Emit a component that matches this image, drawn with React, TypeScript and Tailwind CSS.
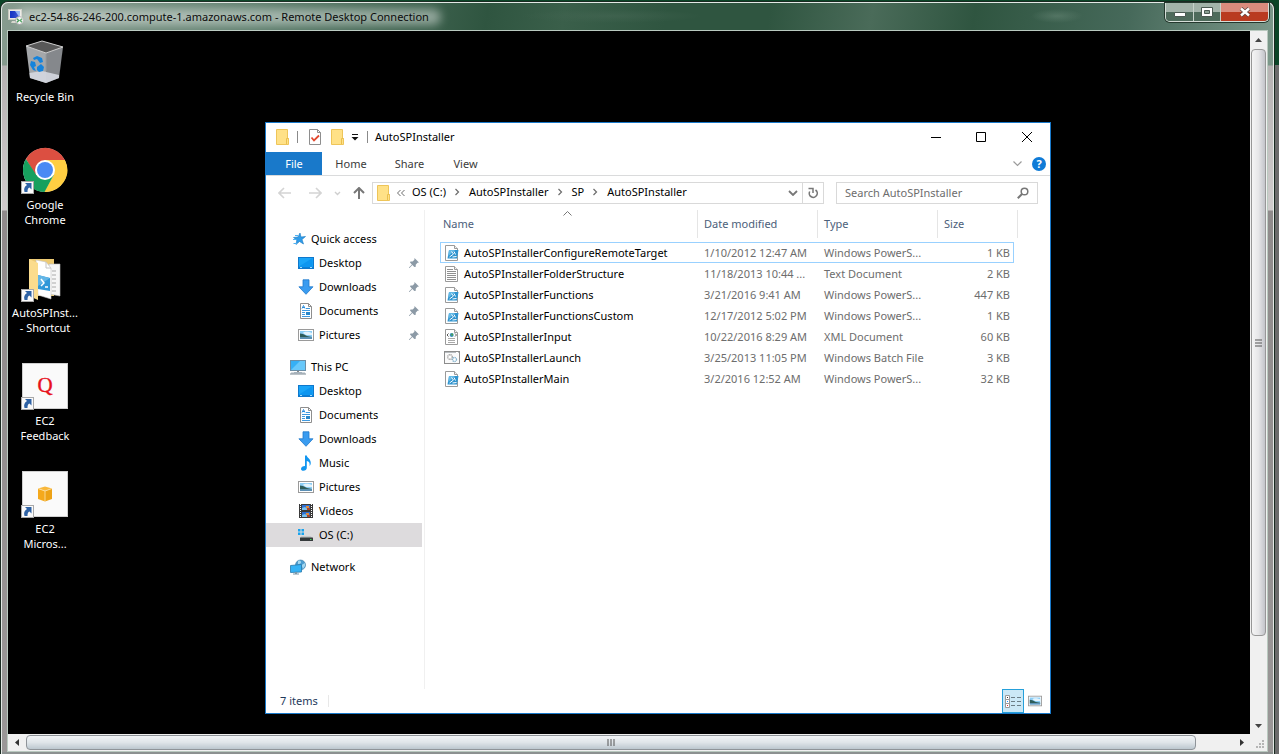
import React from 'react'

type IconName =
    | 'star' | 'desktop' | 'download' | 'document' | 'picture' | 'pc'
    | 'music' | 'video' | 'drive' | 'network'

interface NavItem {
    label: string
    icon: IconName
    pinned?: boolean
    selected?: boolean
}

interface NavGroup {
    root: NavItem
    children: NavItem[]
}

interface FileEntry {
    name: string
    modified: string
    type: string
    size: string
    kind: 'ps' | 'txt' | 'xml' | 'bat'
}

const navGroups: NavGroup[] = [
    {
        root: { label: 'Quick access', icon: 'star' },
        children: [
            { label: 'Desktop', icon: 'desktop', pinned: true },
            { label: 'Downloads', icon: 'download', pinned: true },
            { label: 'Documents', icon: 'document', pinned: true },
            { label: 'Pictures', icon: 'picture', pinned: true },
        ],
    },
    {
        root: { label: 'This PC', icon: 'pc' },
        children: [
            { label: 'Desktop', icon: 'desktop' },
            { label: 'Documents', icon: 'document' },
            { label: 'Downloads', icon: 'download' },
            { label: 'Music', icon: 'music' },
            { label: 'Pictures', icon: 'picture' },
            { label: 'Videos', icon: 'video' },
            { label: 'OS (C:)', icon: 'drive', selected: true },
        ],
    },
    { root: { label: 'Network', icon: 'network' }, children: [] },
]

const files: FileEntry[] = [
    { name: 'AutoSPInstallerConfigureRemoteTarget', modified: '1/10/2012 12:47 AM', type: 'Windows PowerS...', size: '1 KB', kind: 'ps' },
    { name: 'AutoSPInstallerFolderStructure', modified: '11/18/2013 10:44 ...', type: 'Text Document', size: '2 KB', kind: 'txt' },
    { name: 'AutoSPInstallerFunctions', modified: '3/21/2016 9:41 AM', type: 'Windows PowerS...', size: '447 KB', kind: 'ps' },
    { name: 'AutoSPInstallerFunctionsCustom', modified: '12/17/2012 5:02 PM', type: 'Windows PowerS...', size: '1 KB', kind: 'ps' },
    { name: 'AutoSPInstallerInput', modified: '10/22/2016 8:29 AM', type: 'XML Document', size: '60 KB', kind: 'xml' },
    { name: 'AutoSPInstallerLaunch', modified: '3/25/2013 11:05 PM', type: 'Windows Batch File', size: '3 KB', kind: 'bat' },
    { name: 'AutoSPInstallerMain', modified: '3/2/2016 12:52 AM', type: 'Windows PowerS...', size: '32 KB', kind: 'ps' },
]

function PictureGlyph() {
    return (
        <>
            <rect x="0.5" y="2.5" width="15" height="11" fill="#fff" stroke="#9a9a9a" />
            <rect x="2" y="4" width="12" height="8" fill="#8ccdf5" />
            <path d="M5 6c2-2 6-1 9 0v2H8z" fill="#e3f3fc" />
            <path d="M2 6.500l3 .5 4 2 5 1v.5H2z" fill="#2f5d5a" />
            <path d="M2 10.500h12V12H2z" fill="#5b8fb5" />
        </>
    )
}

function NavIcon({ name }: { name: IconName }) {
    return (
        <svg viewBox="0 0 16 16" className="size-4 shrink-0" aria-hidden="true">
            {name === 'star' && (
                <>
                    <path d="M10 2l1 4 4.500-.5-3.500 3 1.500 4.500-4-2.500L6 13.500l.8-4.300L3.500 6.500 8 6z" fill="#2f9be8" stroke="#1878c2" strokeWidth="0.600" />
                    <path d="M5 4.500h3M3 8.500h3.500M3.500 12.500H7" stroke="#4fb1f2" />
                </>
            )}
            {name === 'desktop' && (
                <>
                    <rect x="0.500" y="2.500" width="15" height="11" fill="#1aa5f8" stroke="#0f78cc" />
                    <path d="M1 11.500L14.500 3v9.500H1z" fill="#0d96f0" />
                    <path d="M1 12.500h14" stroke="#0c7fd4" />
                    <path d="M2 12.500h2M12 12.500h2" stroke="#9fdcff" />
                </>
            )}
            {name === 'download' && (
                <path d="M5 .8h6v7h4L8 15.300.9 7.800H5z" fill="#3a9cf0" stroke="#1f79cc" strokeWidth="0.800" />
            )}
            {name === 'document' && (
                <>
                    <path d="M2.500.5h8l3 3v12h-11z" fill="#fff" stroke="#8e8e8e" />
                    <path d="M10.500.5v3h3" fill="none" stroke="#8e8e8e" />
                    <path d="M4 5.500l1.500-3L7 5.500M4.500 4.500h2" fill="none" stroke="#2a8ee0" />
                    <path d="M8 5.500h4M4 7.500h8M4 9.500h3M4 11.500h3M4 13.500h8" stroke="#3f9ae0" />
                    <rect x="8" y="9" width="4" height="3" fill="#2987c9" />
                </>
            )}
            {name === 'picture' && <PictureGlyph />}
            {name === 'pc' && (
                <>
                    <rect x="0.500" y="1.500" width="15" height="10" fill="#36b0f5" stroke="#6b8ea6" />
                    <path d="M1 11L10 2h5v9z" fill="#68c8fa" />
                    <path d="M7 12h2v1H7z" fill="#8a8a8a" />
                    <path d="M1 14h14M4 13.500h8" stroke="#a5b2bc" />
                    <path d="M0 15h16" stroke="#7b8993" />
                </>
            )}
            {name === 'music' && (
                <path d="M7 .5h1.800c.2 2.500 4.700 3.500 3.900 8.500-.3 1-.8 1.600-1.200 2 .8-3-.5-4.600-2.700-5v7c0 1.600-1.600 2.800-3.400 2.800-1.400 0-2.400-.8-2.400-1.900C3 12.300 4.800 11 7 11z" fill="#1296f0" />
            )}
            {name === 'video' && (
                <>
                    <rect x="1" y="1" width="14" height="14" fill="#3a3a3a" />
                    <path d="M2.500 1v14M13.500 1v14" stroke="#fff" strokeDasharray="1 1" />
                    <rect x="4" y="2" width="8" height="5" fill="#2f6fd0" />
                    <rect x="4" y="9" width="8" height="5" fill="#2f6fd0" />
                    <path d="M4 5l3-1 2 1.500V7H4zM4 12l3-1 2 1.500V14H4z" fill="#79c1ef" />
                    <path d="M8 3h3v2H8zM8 10h3v2H8z" fill="#e08a3c" />
                    <path d="M9 5h3v2H9zM9 12h3v2H9z" fill="#a8452c" />
                </>
            )}
            {name === 'drive' && (
                <>
                    <path d="M0 2h2.500v2.500H0zM3.500 2H6v2.500H3.500zM0 5.500h2.500V8H0zM3.500 5.500H6V8H3.500z" fill="#19a3ee" />
                    <path d="M3.500 9h9l2 2H1.500z" fill="#c3c6c8" />
                    <rect x="2" y="10.500" width="13" height="3.500" rx="0.500" fill="#35393b" />
                    <rect x="12" y="12" width="1.500" height="1" fill="#46d65c" />
                </>
            )}
            {name === 'network' && (
                <>
                    <circle cx="10.500" cy="6" r="5" fill="#4c9dd0" stroke="#3a7aa5" strokeWidth="0.600" />
                    <path d="M8 2c2-1 3 0 3 1.500S9 5 8 5zM11.500 6l3.500-2v3l-2 3z" fill="#a3d6ef" />
                    <path d="M.5 6.500l11-1v7.500l-11 .5z" fill="#35b2f5" stroke="#2878ab" strokeWidth="0.800" />
                    <path d="M5 13h2v2H5zM3 14.500h6v1H3z" fill="#7b98aa" />
                </>
            )}
        </svg>
    )
}

function PinIcon() {
    return (
        <svg viewBox="0 0 12 12" className="size-3 shrink-0" aria-hidden="true">
            <path d="M6.500 1L11 5.500l-1.500.3-1.800 2 .1 2L6.300 10 4.400 8 1.500 11H1v-.5L3.900 7.500 2 5.600l.5-1.200 2.100.1 1.800-1.700z" fill="#8c9aa6" />
        </svg>
    )
}

function FolderIcon() {
    return (
        <svg viewBox="0 0 14 16" className="h-4 w-3.5 shrink-0" aria-hidden="true">
            <path d="M.5.5h11v9h1v6H.5z" fill="#ffe187" stroke="#eec559" />
            <path d="M10.500 15V9.500h2" fill="none" stroke="#e9bf4d" />
        </svg>
    )
}

function FileIcon({ kind }: { kind: FileEntry['kind'] }) {
    if (kind === 'bat') {
        return (
            <svg viewBox="0 0 16 16" className="size-4 shrink-0" aria-hidden="true">
                <rect x="0.500" y="1.500" width="15" height="12" fill="#fafafa" stroke="#8c8c8c" />
                <path d="M1 2.500h14" stroke="#b7bcc0" />
                <path d="M12 2.500h2" stroke="#fff" />
                <circle cx="6" cy="7" r="2.300" fill="#fff" stroke="#a0a0a0" strokeWidth="1.300" strokeDasharray="1.200 .5" />
                <circle cx="10.500" cy="9.500" r="2" fill="#fff" stroke="#83b2cd" strokeWidth="1.300" strokeDasharray="1.200 .5" />
            </svg>
        )
    }
    return (
        <svg viewBox="0 0 16 16" className="size-4 shrink-0" aria-hidden="true">
            <path d="M1.500.5h9l3 3v12h-12z" fill="#fff" stroke="#9a9a9a" />
            <path d="M10.500.5v3h3" fill="#f1f1f1" stroke="#9a9a9a" />
            {kind === 'txt' && (
                <path d="M3 3.500h6M3 5.500h9M3 7.500h9M3 9.500h9M3 11.500h9M3 13.500h9" stroke="#909090" />
            )}
            {kind === 'ps' && (
                <>
                    <path d="M5 5h9.500L13 13.500H3.500z" fill="#2f94cf" />
                    <path d="M5 5h6L4.500 11z" fill="#63b9e6" />
                    <path d="M7.500 6.500l2 2.500-4 3M8.500 12l4-.5M10 6.500l1.500 3" fill="none" stroke="#fff" />
                </>
            )}
            {kind === 'xml' && (
                <>
                    <path d="M4.500 4.500L3 6l1.500 1.500M11 4.500L12.500 6 11 7.500" fill="none" stroke="#555" />
                    <circle cx="7.700" cy="6" r="2" fill="#3b8fb8" />
                    <path d="M7 5l2-.5v1.800L8 7z" fill="#47a24b" />
                    <path d="M4 9.500h7M4 11.500h7M4 13.500h7" stroke="#a9a9a9" />
                </>
            )}
        </svg>
    )
}

function ShortcutBadge() {
    return (
        <g transform="translate(0 34)">
            <rect x="0.500" y="0.500" width="12" height="12" fill="#fafafa" stroke="#a8a8a8" />
            <path d="M4 2h6.500v6.500L8.500 6.500C7 7 6.500 8.500 6.500 11H3.500C2.500 8 3.500 5.500 6 4z" fill="#2e62a5" />
        </g>
    )
}

function RecycleBinArt() {
    return (
        <>
            <path d="M5 7L21 2l21 6-17 6z" fill="#585858" />
            <path d="M5 7l20 7v30L9 39z" fill="#a4a7aa" />
            <path d="M42 8l-17 6v30l13-5z" fill="#85888c" />
            <path d="M8.500 34L21 32l17 4v3l-13 5L9 39z" fill="#d5d8e0" opacity="0.900" />
            <path d="M25 14v18" stroke="#96999c" />
            <path d="M5 7L21 2l21 6-17 6z" fill="none" stroke="#cfcfcf" />
            <g fill="#1583dc">
                <path d="M12 19l4-2 5 2 1 4-3 1-3-4-3 1z" />
                <path d="M10 22l4 1 1 4-2 1 2 4-3-1-3-5z" />
                <path d="M16 28l4-3 3 3-1 4-4 1-2-2z" />
            </g>
        </>
    )
}

function ChromeArt() {
    return (
        <>
            <circle cx="24" cy="23" r="22" fill="#fff" />
            <path d="M4.900 12A22 22 0 0 1 43.900 13H24L14.500 28.500z" fill="#dc4f41" />
            <path d="M43.900 13A22 22 0 0 1 23 45l9.700-17L24 13z" fill="#ffce42" />
            <path d="M4.900 12A22 22 0 0 0 23.500 45l9.200-17H15.300z" fill="#17a05e" />
            <circle cx="24" cy="23" r="10" fill="#fff" />
            <circle cx="24" cy="23" r="8" fill="#4a8af4" />
            <ShortcutBadge />
        </>
    )
}

function FolderArt() {
    return (
        <>
            <path d="M8 4h25v37H8z" fill="#eecb74" />
            <path d="M28 9h11v32l-11-2z" fill="#f6f6f6" stroke="#bbb" strokeWidth="0.600" />
            <path d="M31 16h4M31 20h4M31 24h4M31 28h4M31 32h4M31 36h4" stroke="#aaa" />
            <path d="M15 5l10 2 5 6v31l-13-4z" fill="#fff" stroke="#c4c4c4" strokeWidth="0.600" />
            <path d="M25 7v6h5" fill="none" stroke="#c4c4c4" />
            <path d="M17 20l12 3v13l-12-2z" fill="#2f97d8" />
            <path d="M17 20l12 3-12 8z" fill="#62b5e6" />
            <path d="M20 24l3 4-3 3M24 32h3" fill="none" stroke="#fff" strokeWidth="1.500" />
            <path d="M8 4l9 4v37l-9-4z" fill="#fbdc8d" />
            <ShortcutBadge />
        </>
    )
}

function FeedbackArt() {
    return (
        <>
            <rect x="1.500" y="0.500" width="45" height="45" fill="#fafafa" stroke="#cfcfcf" />
            <text x="24" y="29" textAnchor="middle" fontFamily="'Liberation Serif', serif" fontSize="21" fill="#e8111c" stroke="#e8111c" strokeWidth="0.400">Q</text>
            <ShortcutBadge />
        </>
    )
}

function Ec2Art() {
    return (
        <>
            <rect x="1.500" y="0.500" width="45" height="45" fill="#fafafa" stroke="#cfcfcf" />
            <path d="M17 17.500l7-2 7 2-7 2.500z" fill="#f9b83c" />
            <path d="M17 17.500l7 2.500v10.500L17 28z" fill="#f5a91c" />
            <path d="M31 17.500L24 20v10.500l7-2.500z" fill="#eda216" />
            <path d="M17 17.500l7 2.500 7-2.500M24 20v10.500" fill="none" stroke="#fde3ae" strokeWidth="0.800" />
            <ShortcutBadge />
        </>
    )
}

const desktopIcons = [
    { lines: ['Recycle Bin'], Art: RecycleBinArt },
    { lines: ['Google', 'Chrome'], Art: ChromeArt },
    { lines: ['AutoSPInst...', '- Shortcut'], Art: FolderArt },
    { lines: ['EC2', 'Feedback'], Art: FeedbackArt },
    { lines: ['EC2', 'Micros...'], Art: Ec2Art },
]

function DesktopIcons() {
    return (
        <div className="flex w-[74px] flex-col">
            {desktopIcons.map(({ lines, Art }) => (
                <button key={lines.join(' ')} type="button" className="flex h-[108px] flex-col items-center pt-2 text-white">
                    <svg viewBox="0 0 48 48" className="size-12" aria-hidden="true">
                        <Art />
                    </svg>
                    <span className="mt-0.5 flex flex-col whitespace-nowrap leading-[15px]">
                        {lines.map((line) => <span key={line}>{line}</span>)}
                    </span>
                </button>
            ))}
        </div>
    )
}

function NavRow({ item, child }: { item: NavItem; child?: boolean }) {
    return (
        <a
            href="#"
            className={`mr-0.5 flex h-6 items-center gap-[5px] pr-0.5 ${child ? 'pl-8' : 'pl-6'} ${item.selected ? 'bg-[#dddbdd]' : ''}`}
        >
            <NavIcon name={item.icon} />
            <span className="grow">{item.label}</span>
            {item.pinned && <PinIcon />}
        </a>
    )
}

function ExplorerTitleBar() {
    return (
        <div className="flex h-[29px]">
            <div className="flex items-center pb-0.5 pl-2.5">
                <FolderIcon />
                <span className="ml-[7px] h-3 w-px bg-[#8a8a8a]" />
                <button type="button" aria-label="Properties" className="ml-2.5">
                    <svg viewBox="0 0 14 16" className="h-4 w-3.5" aria-hidden="true">
                        <path d="M1.500.5h8l3 3v12h-11z" fill="#fff" stroke="#8e8e8e" />
                        <path d="M9.500.5v3h3" fill="none" stroke="#8e8e8e" />
                        <path d="M3.500 8.500l2.500 3 5-5" fill="none" stroke="#e2492f" strokeWidth="1.800" />
                    </svg>
                </button>
                <button type="button" aria-label="New folder" className="ml-[9px]">
                    <FolderIcon />
                </button>
                <button type="button" aria-label="Customize Quick Access Toolbar" className="ml-1.5">
                    <svg viewBox="0 0 8 8" className="size-2" aria-hidden="true">
                        <path d="M1 1.500h6" stroke="#111" />
                        <path d="M.5 4h7L4 7.500z" fill="#111" />
                    </svg>
                </button>
                <span className="ml-2 h-3 w-px bg-[#8a8a8a]" />
                <span className="ml-[7px]">AutoSPInstaller</span>
            </div>
            <div className="ml-auto flex pb-0.5">
                <button type="button" aria-label="Minimize" className="flex w-[45px] items-center justify-center">
                    <svg viewBox="0 0 10 10" className="size-2.5"><path d="M0 5.500h10" stroke="#000" /></svg>
                </button>
                <button type="button" aria-label="Maximize" className="flex w-[46px] items-center justify-center">
                    <svg viewBox="0 0 10 10" className="size-2.5"><path d="M.5.5h9v9h-9z" fill="none" stroke="#000" /></svg>
                </button>
                <button type="button" aria-label="Close" className="flex w-[46px] items-center justify-center">
                    <svg viewBox="0 0 10 10" className="size-2.5"><path d="M0 0l10 10M10 0L0 10" stroke="#000" /></svg>
                </button>
            </div>
        </div>
    )
}

function RibbonTabs() {
    return (
        <div className="flex h-6 border-b border-[#dadbdc] text-[#3b3b3b]">
            <button type="button" className="w-14 bg-[#1979ca] text-white">File</button>
            <button type="button" className="w-[58px]">Home</button>
            <button type="button" className="w-[59px]">Share</button>
            <button type="button" className="w-[53px]">View</button>
            <div className="ml-auto flex items-center gap-2.5 pr-1">
                <button type="button" aria-label="Expand the Ribbon">
                    <svg viewBox="0 0 9 6" className="h-1.5 w-[9px]"><path d="M.5.5l4 4 4-4" fill="none" stroke="#9b9b9b" strokeWidth="1.200" /></svg>
                </button>
                <button type="button" aria-label="Help" className="flex size-3.5 items-center justify-center rounded-full bg-[#0f7bd7] font-bold leading-none text-white">?</button>
            </div>
        </div>
    )
}

function Crumb({ children }: { children: React.ReactNode }) {
    return <a href="#" className="whitespace-nowrap">{children}</a>
}

function CrumbArrow() {
    return (
        <svg viewBox="0 0 5 8" className="mx-[9px] h-2 w-[5px] shrink-0" aria-hidden="true">
            <path d="M.5 1l3 3-3 3" fill="none" stroke="#6c6c6c" strokeWidth="1.200" />
        </svg>
    )
}

function AddressRow() {
    return (
        <div className="flex items-center pr-3 pt-1.5 pb-1.5 pl-3">
            <button type="button" aria-label="Back">
                <svg viewBox="0 0 14 12" className="h-3 w-3.5"><path d="M1 6h12M6 1L1 6l5 5" fill="none" stroke="#d4d4d4" strokeWidth="1.600" /></svg>
            </button>
            <button type="button" aria-label="Forward" className="ml-4">
                <svg viewBox="0 0 14 12" className="h-3 w-3.5"><path d="M1 6h12M8 1l5 5-5 5" fill="none" stroke="#d4d4d4" strokeWidth="1.600" /></svg>
            </button>
            <button type="button" aria-label="Recent locations" className="ml-3">
                <svg viewBox="0 0 7 5" className="h-[5px] w-[7px]"><path d="M1 1l2.500 2.500L6 1" fill="none" stroke="#cfcfcf" strokeWidth="1.400" /></svg>
            </button>
            <button type="button" aria-label="Up" className="ml-3">
                <svg viewBox="0 0 12 12" className="size-3"><path d="M6 12V1M1 6l5-5 5 5" fill="none" stroke="#777" strokeWidth="2" /></svg>
            </button>
            <div className="ml-[7px] flex h-[22px] grow items-center border border-[#d9d9d9] pl-1">
                <FolderIcon />
                <svg viewBox="0 0 8 8" className="ml-1.5 size-2 shrink-0" aria-hidden="true">
                    <path d="M3.500 1l-3 3 3 3M7.500 1l-3 3 3 3" fill="none" stroke="#6c6c6c" />
                </svg>
                <nav className="ml-[7px] flex grow items-center pb-0.5">
                    <Crumb>OS (C:)</Crumb>
                    <CrumbArrow />
                    <Crumb>AutoSPInstaller</Crumb>
                    <CrumbArrow />
                    <Crumb>SP</Crumb>
                    <CrumbArrow />
                    <Crumb>AutoSPInstaller</Crumb>
                </nav>
                <button type="button" aria-label="Previous locations" className="mr-1">
                    <svg viewBox="0 0 10 6" className="h-1.5 w-2.5"><path d="M1 1l4 4 4-4" fill="none" stroke="#777" strokeWidth="1.800" /></svg>
                </button>
                <button type="button" aria-label="Refresh" className="flex h-full w-[21px] items-center justify-center border-l border-[#d9d9d9]">
                    <svg viewBox="0 0 12 12" className="size-3">
                        <path d="M8.500 3A4 4 0 1 1 2.700 4.500" fill="none" stroke="#777" strokeWidth="1.600" />
                        <path d="M1.500 1.500H6V6" fill="none" stroke="#777" strokeWidth="1.500" />
                    </svg>
                </button>
            </div>
            <label className="ml-3 flex h-[22px] w-[202px] items-center border border-[#d9d9d9] pr-2 pl-2">
                <input type="search" aria-label="Search AutoSPInstaller" placeholder="Search AutoSPInstaller" className="min-w-0 grow bg-transparent outline-none placeholder:text-[#6d6d6d]" />
                <svg viewBox="0 0 12 12" className="size-3 shrink-0" aria-hidden="true">
                    <circle cx="7.500" cy="4.500" r="3.300" fill="none" stroke="#777" strokeWidth="1.500" />
                    <path d="M5 7L.8 11.200" stroke="#777" strokeWidth="2" />
                </svg>
            </label>
        </div>
    )
}

function FileTable() {
    const th = 'h-7 border-r border-[#e5e5e5] text-left font-normal'
    return (
        <table className="w-[578px] table-fixed border-separate border-spacing-0">
            <colgroup>
                <col className="w-[258px]" />
                <col className="w-[120px]" />
                <col className="w-[120px]" />
                <col className="w-[76px]" />
                <col className="w-1" />
            </colgroup>
            <thead className="text-[#4c607a]">
                <tr>
                    <th className={`${th} relative pl-[3px]`}>
                        Name
                        <svg viewBox="0 0 9 5" className="absolute top-px left-[123px] h-[5px] w-[9px]" aria-hidden="true">
                            <path d="M.5 4.500l4-4 4 4" fill="none" stroke="#777" />
                        </svg>
                    </th>
                    <th className={`${th} pl-1.5`}>Date modified</th>
                    <th className={`${th} pl-1.5`}>Type</th>
                    <th className={`${th} pl-1.5`} colSpan={2}>Size</th>
                </tr>
                <tr className="h-1"><td colSpan={5} /></tr>
            </thead>
            <tbody>
                {files.map((file, i) => {
                    const edge = i === 0 ? 'border-[#99d1ff]' : 'border-transparent'
                    return (
                        <tr key={file.name} className="h-[21px] whitespace-nowrap text-[#6d6d6d]">
                            <td className={`border-y border-l ${edge} pl-[3px] text-black`}>
                                <span className="flex items-center gap-1">
                                    <FileIcon kind={file.kind} />
                                    {file.name}
                                </span>
                            </td>
                            <td className={`border-y ${edge} pl-1.5`}>{file.modified}</td>
                            <td className={`border-y ${edge} pl-1.5`}>{file.type}</td>
                            <td className={`border-y border-r ${edge} pr-[3px] text-right`}>{file.size}</td>
                            <td />
                        </tr>
                    )
                })}
            </tbody>
        </table>
    )
}

function StatusBar() {
    return (
        <div className="flex h-6 items-center pl-3.5 text-[#1e395b]">
            <span>7 items</span>
            <span className="ml-2.5 h-3 w-px bg-[#e8e8e8]" />
            <div className="ml-auto flex h-full items-center pr-2">
                <button type="button" aria-label="Details view" className="flex h-full w-[22px] items-center justify-center border border-[#26a0da] bg-[#cbe8f6]">
                    <svg viewBox="0 0 17 13" className="h-[13px] w-[17px]">
                        <path d="M.5.500h4v4h-4zM.5 4.500h4v4h-4zM.5 8.500h4v4h-4z" fill="#fff" stroke="#9a9a9a" />
                        <path d="M2 2.500h1" stroke="#333" />
                        <path d="M2 6.500h1" stroke="#1e90ff" />
                        <path d="M2 10.500h1" stroke="#e03030" />
                        <path d="M6 2.500h4M12 2.500h4M6 6.500h4M12 6.500h4M6 10.500h4M12 10.500h4" stroke="#6b7d86" />
                    </svg>
                </button>
                <button type="button" aria-label="Thumbnail view" className="ml-1">
                    <svg viewBox="0 0 16 16" className="size-3.5"><PictureGlyph /></svg>
                </button>
            </div>
        </div>
    )
}

function ExplorerWindow() {
    return (
        <section className="absolute top-[91px] left-[257px] flex h-[592px] w-[786px] flex-col border border-[#1979ca] bg-white text-black">
            <ExplorerTitleBar />
            <RibbonTabs />
            <AddressRow />
            <div className="flex grow">
                <nav className="flex w-[159px] flex-col gap-2 border-r border-[#f0f0f0] pt-[17px]">
                    {navGroups.map((group) => (
                        <div key={group.root.label}>
                            <NavRow item={group.root} />
                            {group.children.map((item) => <NavRow key={item.label} item={item} child />)}
                        </div>
                    ))}
                </nav>
                <div className="pl-[15px]">
                    <FileTable />
                </div>
            </div>
            <StatusBar />
        </section>
    )
}

function VerticalScrollbar() {
    return (
        <div className="flex w-[17px] flex-col bg-[#f0f0f0]">
            <button type="button" aria-label="Scroll up" className="flex h-[18px] items-center justify-center">
                <svg viewBox="0 0 7 4" className="h-1 w-[7px]"><path d="M0 4l3.500-4L7 4z" fill="#444" /></svg>
            </button>
            <div className="mx-px flex grow-[586] items-center justify-center rounded-sm border border-[#979797] bg-linear-to-r from-[#f5f5f5] via-[#e6e6e8] to-[#c3c4ca]">
                <svg viewBox="0 0 8 8" className="size-2"><path d="M0 1h7M0 4h7M0 7h7" stroke="#555" /></svg>
            </div>
            <div className="grow-[82]" />
            <button type="button" aria-label="Scroll down" className="flex h-[17px] items-center justify-center">
                <svg viewBox="0 0 7 4" className="h-1 w-[7px]"><path d="M0 0h7L3.500 4z" fill="#444" /></svg>
            </button>
        </div>
    )
}

function HorizontalScrollbar() {
    return (
        <div className="flex h-[17px] bg-[#f0f0f0]">
            <button type="button" aria-label="Scroll left" className="flex w-[18px] items-center justify-center">
                <svg viewBox="0 0 4 7" className="h-[7px] w-1"><path d="M4 0v7L0 3.500z" fill="#333" /></svg>
            </button>
            <div className="my-px flex grow-[1169] items-center justify-center rounded-sm border border-[#8f9499] bg-linear-to-b from-[#f2f5f7] via-[#dfe5e9] to-[#bcc7cf]">
                <svg viewBox="0 0 8 8" className="size-2"><path d="M1 0v7M4 0v7M7 0v7" stroke="#555" /></svg>
            </div>
            <div className="grow-[37]" />
            <button type="button" aria-label="Scroll right" className="flex w-[17px] items-center justify-center">
                <svg viewBox="0 0 4 7" className="h-[7px] w-1"><path d="M0 0v7l4-3.500z" fill="#333" /></svg>
            </button>
            <div className="flex w-[17px] items-end justify-end p-0.5">
                <svg viewBox="0 0 10 10" className="size-2.5" aria-hidden="true">
                    <path d="M7 1h2v2H7zM4 4h2v2H4zM7 4h2v2H7zM1 7h2v2H1zM4 7h2v2H4zM7 7h2v2H7z" fill="#b5b5b5" />
                </svg>
            </div>
        </div>
    )
}

function RemoteTitleBar() {
    return (
        <header className="flex h-[27px] items-start">
            <div className="flex h-full items-center gap-[5px] pl-1.5">
                <svg viewBox="0 0 16 16" className="size-4 shrink-0" aria-hidden="true">
                    <rect x="0.500" y="0.500" width="13" height="10" fill="#e8e8e0" stroke="#c8c8c0" />
                    <rect x="2" y="2" width="10" height="7" fill="#1232c4" />
                    <path d="M7 2h5v7z" fill="#7fa5ee" />
                    <path d="M4 12h5v2H3z" fill="#d5d5cc" />
                    <circle cx="11.500" cy="11.500" r="4" fill="#f2f2f2" stroke="#888" strokeWidth="0.800" />
                    <path d="M9 9.800l1.800 1.700L9 13.200M14 9.800l-1.800 1.700 1.800 1.700" fill="none" stroke="#1d8a35" strokeWidth="1.200" />
                </svg>
                <h1 className="relative whitespace-nowrap text-[#0b0b0b]">
                    <span className="absolute -inset-x-3 inset-y-0 rounded-full bg-white/45 blur-[5px]" />
                    <span className="relative">ec2-54-86-246-200.compute-1.amazonaws.com - Remote Desktop Connection</span>
                </h1>
            </div>
            <div className="mr-1 ml-auto flex h-[19px] divide-x divide-[#c7d3cb] overflow-hidden rounded-b-[5px] border border-t-0 border-[#d5ded8] shadow-[0_0_0_1px_#24382d]">
                <button type="button" aria-label="Minimize" className="flex w-7 items-center justify-center bg-linear-to-b from-[#a2b3a9] from-50% to-[#4e6b5b] to-50%">
                    <svg viewBox="0 0 12 5" className="mt-1 h-[5px] w-3"><path d="M.5.500h11v4H.5z" fill="#fff" stroke="#4b5a52" /></svg>
                </button>
                <button type="button" aria-label="Maximize" className="flex w-[27px] items-center justify-center bg-linear-to-b from-[#a2b3a9] from-50% to-[#4e6b5b] to-50%">
                    <svg viewBox="0 0 12 10" className="h-2.5 w-3">
                        <path d="M.5.500h11v9H.5z" fill="#fff" stroke="#4b5a52" />
                        <path d="M3.500 3.500h5v3h-5z" fill="#8ba094" stroke="#4b5a52" />
                    </svg>
                </button>
                <button type="button" aria-label="Close" className="flex w-[47px] items-center justify-center bg-linear-to-b from-[#d98b7d] from-50% to-[#b93a20] to-50%">
                    <svg viewBox="0 0 12 10" className="h-2.5 w-3">
                        <path d="M2 1.500l8 7M10 1.500l-8 7" stroke="#5b4540" strokeWidth="4" />
                        <path d="M2 1.500l8 7M10 1.500l-8 7" stroke="#fff" strokeWidth="2.400" />
                    </svg>
                </button>
            </div>
        </header>
    )
}

export default function App() {
    return (
        <div className="flex h-screen min-h-[600px] bg-linear-to-b from-[#0b4527] from-[65px] to-[#6b6b6b] to-[65px] pt-px pr-1 font-['Noto_Sans','Segoe_UI',sans-serif] text-[11px] leading-4">
            <div className="flex min-w-0 grow rounded-t-lg border-x border-t border-[#1a2a21] bg-[#8f8d8d]">
                <div className="flex min-w-0 grow flex-col rounded-t-[7px] border-x border-t border-[#e3e9e5] bg-[radial-gradient(ellipse_90px_7px_at_48%_13px,#48695680,transparent),radial-gradient(ellipse_26px_7px_at_83%_13px,#6a897880,transparent),linear-gradient(100deg,#879c8f_0,#5f7f6e_20%,#2f5540_38%,#3a5f4a_44%,#2f5540_52%,#2f5540_60%,#4a6b59_68%,#2f5540_76%,#46695a_88%,#7d998b_100%)] bg-[length:100%_64px] bg-no-repeat">
                    <RemoteTitleBar />
                    <div className="flex min-h-0 grow bg-[linear-gradient(to_bottom,transparent_35px,#b5b2b2_36px,#cfcccc_180px,#8f8b8b_181px,#9a9797_100%)] px-[5px]">
                        <div className="flex min-w-0 grow flex-col border border-[#b9c9bf]">
                            <div className="flex min-h-0 grow">
                                <main className="relative min-w-0 grow overflow-hidden bg-black">
                                    <DesktopIcons />
                                    <ExplorerWindow />
                                </main>
                                <VerticalScrollbar />
                            </div>
                            <HorizontalScrollbar />
                        </div>
                    </div>
                    <div className="h-0.5 shrink-0 bg-[#8c9190]" />
                </div>
            </div>
        </div>
    )
}
